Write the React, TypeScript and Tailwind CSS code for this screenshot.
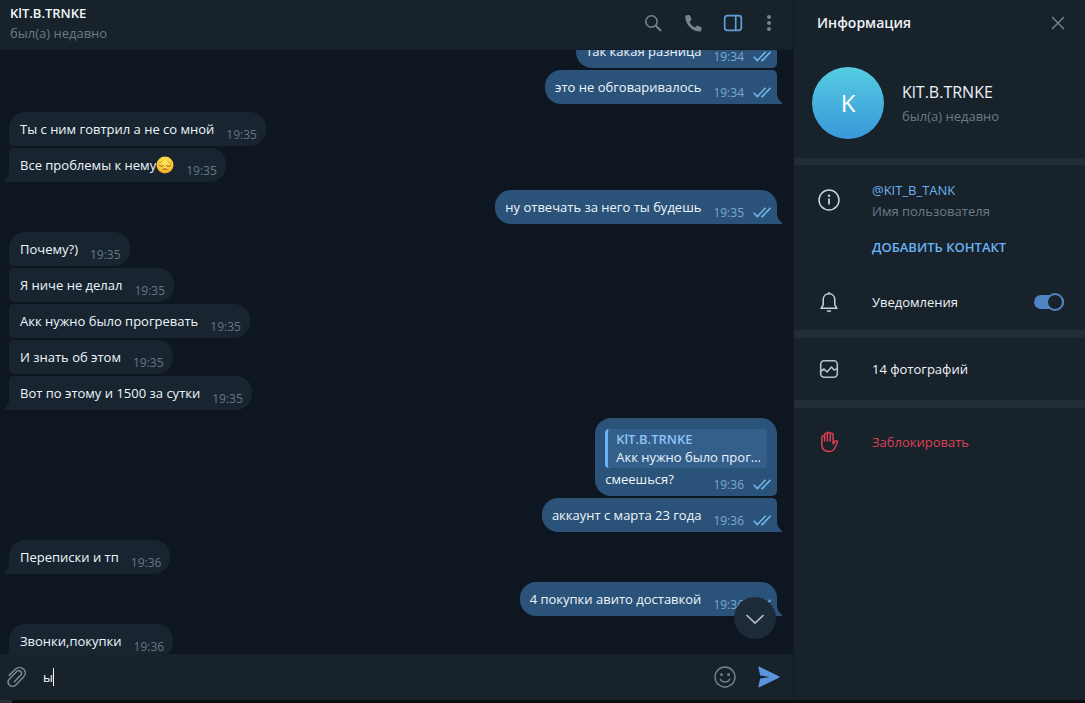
import React from 'react';
import { clsx } from 'clsx';

type Message = {
  text: string;
  time: string;
  emoji?: boolean;
  reply?: { author: string; text: string };
};

type Group = { out: boolean; messages: Message[] };

const CONTACT = {
  name: 'KlT.B.TRNKE',
  status: 'был(а) недавно',
  username: '@KIT_B_TANK',
};

const GROUPS: Group[] = [
  {
    out: true,
    messages: [
      { text: 'так какая разница', time: '19:34' },
      { text: 'это не обговаривалось', time: '19:34' },
    ],
  },
  {
    out: false,
    messages: [
      { text: 'Ты с ним говтрил а не со мной', time: '19:35' },
      { text: 'Все проблемы к нему', time: '19:35', emoji: true },
    ],
  },
  { out: true, messages: [{ text: 'ну отвечать за него ты будешь', time: '19:35' }] },
  {
    out: false,
    messages: [
      { text: 'Почему?)', time: '19:35' },
      { text: 'Я ниче не делал', time: '19:35' },
      { text: 'Акк нужно было прогревать', time: '19:35' },
      { text: 'И знать об этом', time: '19:35' },
      { text: 'Вот по этому и 1500 за сутки', time: '19:35' },
    ],
  },
  {
    out: true,
    messages: [
      {
        text: 'смеешься?',
        time: '19:36',
        reply: { author: 'KlT.B.TRNKE', text: 'Акк нужно было прог...' },
      },
      { text: 'аккаунт с марта 23 года', time: '19:36' },
    ],
  },
  { out: false, messages: [{ text: 'Переписки и тп', time: '19:36' }] },
  { out: true, messages: [{ text: '4 покупки авито доставкой', time: '19:36' }] },
  { out: false, messages: [{ text: 'Звонки,покупки', time: '19:36' }] },
];

function PensiveEmoji() {
  return (
    <svg role="img" aria-label="😔" className="w-[18px] h-[18px] shrink-0" viewBox="0 0 18 18" fill="none">
      <defs>
        <radialGradient id="face" cx="0.5" cy="0.35" r="0.65">
          <stop offset="0" stopColor="#ffe566" />
          <stop offset="0.7" stopColor="#fcc935" />
          <stop offset="1" stopColor="#ee9a1c" />
        </radialGradient>
      </defs>
      <circle cx="9" cy="9" r="8.5" fill="url(#face)" />
      <path d="M2.5 7.2C4 7 5.6 6.2 6.4 5M15.5 7.2C14 7 12.4 6.2 11.6 5" stroke="#c98a24" strokeWidth="0.8" strokeLinecap="round" />
      <path d="M3.4 9.2c1 1.5 3 1.6 4 .5M14.6 9.2c-1 1.5-3 1.6-4 .5" stroke="#7d4c12" strokeWidth="1" strokeLinecap="round" />
      <path d="M6.8 13.6c1.2-.9 3.2-.9 4.4 0" stroke="#7d4c12" strokeWidth="1" strokeLinecap="round" />
    </svg>
  );
}

function ReadMark() {
  return (
    <svg className="w-[18px] h-[18px] ml-[9px]" viewBox="0 0 18 18" fill="none" stroke="#76b8ee" strokeWidth="1.5">
      <path d="M0.7 8.800 4.300 12.600 12.600 3.800" />
      <path d="M8.300 11.800 9.200 12.600 17.600 3.800" />
    </svg>
  );
}

function Tail({ out }: { out: boolean }) {
  return (
    <svg
      className={clsx('absolute bottom-0 w-[6px] h-[10px]', out ? '-right-[5px]' : '-left-[5px] -scale-x-100')}
      viewBox="0 0 6 10"
      fill={out ? '#2b5278' : '#182530'}
    >
      <path d="M0 0h1c0 3.500 2 6.500 5 9V10H0z" />
    </svg>
  );
}

function Bubble({ message, out, first, last }: { message: Message; out: boolean; first: boolean; last: boolean }) {
  const { text, time, emoji, reply } = message;

  return (
    <div
      className={clsx(
        'relative flex flex-col pb-[2px] text-[13px]',
        out ? 'self-end bg-[#2b5278] rounded-l-2xl pl-[10px] pr-[6px]' : 'self-start bg-[#182530] rounded-r-2xl pl-[11px] pr-[9px]',
        out && (first ? 'rounded-tr-2xl' : 'rounded-tr-[5px]'),
        out && !last && 'rounded-br-[5px]',
        !out && (first ? 'rounded-tl-2xl' : 'rounded-tl-[5px]'),
        !out && !last && 'rounded-bl-[5px]',
        reply ? 'pt-[11px]' : 'pt-2'
      )}
    >
      {reply && (
        <div className="mr-1 mb-[2px] rounded-[4px] border-l-[3px] border-[#6ab3f3] bg-[#355f8b] pl-2 pr-[6px] pt-[1px] pb-[2px] leading-[18px]">
          <p className="font-semibold text-[#8fc3f7]">{reply.author}</p>
          <p className="text-[#e8f3fc]">{reply.text}</p>
        </div>
      )}
      <div className="flex items-end justify-between gap-3 leading-[18px]">
        <p className="flex items-center pb-[6px] text-[#eef6fb]">
          {text}
          {emoji && <PensiveEmoji />}
        </p>
        <div className={clsx('flex items-center text-xs leading-[18px]', out ? 'text-[#7da8d3]' : 'text-[#677683]')}>
          <time>{time}</time>
          {out && <ReadMark />}
        </div>
      </div>
      {last && <Tail out={out} />}
    </div>
  );
}

function ChatHeader() {
  return (
    <header className="flex h-[50px] shrink-0 justify-between border-b border-[#111b24] bg-[#18222b] pl-[10px] pr-3">
      <div className="pt-[3px]">
        <h1 className="text-[13px] leading-5 font-semibold text-[#f3f7fa]">{CONTACT.name}</h1>
        <p className="text-[13px] leading-5 text-[#6b7a87]">{CONTACT.status}</p>
      </div>
      <div className="flex h-[46px] items-center gap-4 text-[#76828c]">
        <button type="button" aria-label="Поиск">
          <svg className="size-6" viewBox="0 0 24 24" fill="none" stroke="currentColor" strokeWidth="1.6">
            <circle cx="10.500" cy="10.500" r="5.700" />
            <path d="m14.800 14.800 5.200 5.200" strokeWidth="2" />
          </svg>
        </button>
        <button type="button" aria-label="Позвонить">
          <svg className="size-6" viewBox="0 0 24 24" fill="currentColor">
            <path d="M5.400 4.200 8 3.900c.5 0 .9.300 1.100.8l1.300 3.400c.2.500.1 1-.3 1.300L8.500 10.900c1.200 2.400 2.900 4.200 5.300 5.500l1.700-1.500c.3-.3.800-.4 1.200-.2l3.200 1.300c.5.200.7.600.7 1.100l-.2 2.400c-.1.600-.6 1-1.200 1C11 20.500 4.300 13.500 4.300 5.400c0-.6.500-1.100 1.100-1.200z" />
          </svg>
        </button>
        <button type="button" aria-label="Панель информации" className="text-[#5f9fd8]">
          <svg className="size-6" viewBox="0 0 24 24" fill="none" stroke="currentColor" strokeWidth="1.700">
            <rect x="3.700" y="4.700" width="16.600" height="14.600" rx="2.500" />
            <path d="M14.700 4.700v14.600" />
          </svg>
        </button>
        <button type="button" aria-label="Меню" className="-ml-1">
          <svg className="size-6" viewBox="0 0 24 24" fill="currentColor">
            <circle cx="12" cy="6" r="2" />
            <circle cx="12" cy="12" r="2" />
            <circle cx="12" cy="18" r="2" />
          </svg>
        </button>
      </div>
    </header>
  );
}

function Composer() {
  return (
    <form className="flex h-[46px] shrink-0 items-center bg-[#18222b] pl-[5px] pr-3" onSubmit={(e) => e.preventDefault()}>
      <button type="button" aria-label="Прикрепить файл" className="text-[#7b8791]">
        <svg className="size-6" viewBox="0 0 24 24" fill="none" stroke="currentColor" strokeWidth="1.500" strokeLinecap="round">
          <path d="M4.200 10.400 10.300 4.200c2.600-2.500 6-2.300 8.200-.2 2.300 2.300 2.300 5.600 0 8L10.800 19.900c-1.800 1.800-4.600 1.900-6.300.2-1.700-1.700-1.700-4.300 0-6.100l7.200-7.400c1.200-1.200 2.900-1.200 4-.2 1.100 1.100 1.100 2.700 0 3.900l-6.400 6.500" />
        </svg>
      </button>
      <label className="flex flex-1 items-center pl-[14px]">
        <span className="sr-only">Сообщение</span>
        <input
          type="text"
          defaultValue="ы"
          className="field-sizing-content bg-transparent text-[13px] leading-5 text-[#f3f7fa] outline-none"
        />
        <span aria-hidden="true" className="h-[18px] w-px bg-[#f3f7fa]" />
      </label>
      <button type="button" aria-label="Эмодзи" className="mr-5 text-[#76828c]">
        <svg className="size-6" viewBox="0 0 24 24" fill="none" stroke="currentColor" strokeWidth="1.400">
          <circle cx="12" cy="12" r="10" />
          <path d="M7.300 14.300c1 1.700 2.700 2.600 4.700 2.600s3.700-.9 4.700-2.600" strokeLinecap="round" />
          <circle cx="8.500" cy="9.700" r="1.400" fill="currentColor" stroke="none" />
          <circle cx="15.500" cy="9.700" r="1.400" fill="currentColor" stroke="none" />
        </svg>
      </button>
      <button type="submit" aria-label="Отправить" className="text-[#5b93dc]">
        <svg className="size-6" viewBox="0 0 24 24" fill="currentColor">
          <path d="M1.400 2.700c-.2-.8.400-1.300 1.100-1L22 11.200c.7.400.7 1.200 0 1.600L2.500 22.300c-.7.300-1.300-.2-1.100-1l1.800-7.800 9.500-1.500-9.500-1.500z" />
        </svg>
      </button>
    </form>
  );
}

function Chat() {
  return (
    <main className="flex min-w-0 flex-1 flex-col">
      <ChatHeader />
      <div className="relative flex min-h-0 flex-1 flex-col">
        <div className="flex min-h-0 flex-1 flex-col justify-end overflow-hidden bg-[#0e1621] pl-[9px] pr-4">
          <div className="-mb-1 flex flex-col gap-2">
            {GROUPS.map((group, i) => (
              <div key={i} className="flex flex-col gap-[2px]">
                {group.messages.map((message, j) => (
                  <Bubble
                    key={j}
                    message={message}
                    out={group.out}
                    first={j === 0}
                    last={j === group.messages.length - 1}
                  />
                ))}
              </div>
            ))}
          </div>
        </div>
        <button
          type="button"
          aria-label="Вниз"
          className="absolute right-[17px] bottom-[15px] flex size-[42px] items-center justify-center rounded-full bg-[#1d2a37] text-[#b4bcc4]"
        >
          <svg className="size-6" viewBox="0 0 24 24" fill="none" stroke="currentColor" strokeWidth="1.700">
            <path d="m3.500 9 8.500 8 8.500-8" />
          </svg>
        </button>
      </div>
      <Composer />
    </main>
  );
}

function InfoPanel() {
  return (
    <aside className="flex w-[292px] shrink-0 flex-col border-l border-[#111b24] bg-[#18222b] text-[13px] leading-5 text-[#eef3f7]">
      <div className="flex h-[46px] items-center justify-between pl-[23px] pr-[15px]">
        <h2 className="text-sm font-semibold">Информация</h2>
        <button type="button" aria-label="Закрыть" className="text-[#7b8791]">
          <svg className="size-6" viewBox="0 0 24 24" fill="none" stroke="currentColor" strokeWidth="1.400">
            <path d="m6 6 12 12M18 6 6 18" />
          </svg>
        </button>
      </div>

      <div className="flex h-28 items-center gap-[18px] pt-[2px] pl-[18px]">
        <div className="flex size-[72px] items-center justify-center rounded-full bg-linear-to-b from-[#56cbe0] to-[#3a98db] text-2xl font-medium text-white">
          K
        </div>
        <div>
          <p className="text-base leading-6 font-medium">{CONTACT.name}</p>
          <p className="pt-[2px] text-[#6b7a87]">{CONTACT.status}</p>
        </div>
      </div>

      <section className="border-t-[7px] border-[#222d38] pt-[15px]">
        <div className="flex pl-[23px]">
          <svg className="mt-2 size-6 shrink-0 text-[#cbd3da]" viewBox="0 0 24 24" fill="none" stroke="currentColor" strokeWidth="1.500">
            <circle cx="12" cy="12" r="10" />
            <path d="M12 10.500v6" strokeWidth="1.800" />
            <circle cx="12" cy="7.800" r="1.200" fill="currentColor" stroke="none" />
          </svg>
          <div className="pl-[31px]">
            <a href="#username" className="block text-[#6ab3f3]">{CONTACT.username}</a>
            <p className="pt-[1px] text-[#6b7a87]">Имя пользователя</p>
            <button type="button" className="mt-4 font-semibold text-[#6ab3f3]">ДОБАВИТЬ КОНТАКТ</button>
          </div>
        </div>
        <label className="mt-4 flex h-[57px] items-center pl-[23px] pr-[21px]">
          <svg className="size-6 shrink-0 text-[#cbd3da]" viewBox="0 0 24 24" fill="none" stroke="currentColor" strokeWidth="1.500" strokeLinejoin="round">
            <path d="M12 2v1.800M12 3.800c-3.500 0-5.800 2.500-5.800 6v5L4 18.300h16l-2.200-3.500v-5c0-3.500-2.300-6-5.800-6z" />
            <path d="M9.800 20.700c.5.800 1.300 1.100 2.200 1.100s1.700-.3 2.200-1.100z" fill="currentColor" strokeWidth="0.600" />
          </svg>
          <span className="flex-1 pt-[1px] pl-[31px]">Уведомления</span>
          <span className="flex h-[18px] w-[30px] items-center">
            <input type="checkbox" defaultChecked className="peer sr-only" />
            <span className="flex h-[14px] w-[30px] items-center justify-end rounded-full bg-[#4f84c4]">
              <span className="size-[18px] shrink-0 rounded-full border-2 border-[#5288c1] bg-[#18222b]" />
            </span>
          </span>
        </label>
      </section>

      <section className="border-t-8 border-[#222d38]">
        <button type="button" className="flex h-[62px] w-full items-center pl-[23px] text-left">
          <svg className="size-6 shrink-0 text-[#b9c2ca]" viewBox="0 0 24 24" fill="none" stroke="currentColor" strokeWidth="1.600" strokeLinejoin="round">
            <rect x="3.700" y="3.700" width="16.600" height="16.600" rx="3.500" />
            <path d="m3.700 14.500 3.300-2.500 3 3 4.500-5 2.500 3 3.300-1.200" />
          </svg>
          <span className="pl-[31px]">14 фотографий</span>
        </button>
      </section>

      <section className="flex-1 border-t-8 border-[#222d38]">
        <button type="button" className="flex h-[68px] w-full items-center pl-[23px] text-left text-[#dc4054]">
          <svg className="size-6 shrink-0" viewBox="0 0 24 24" fill="none" stroke="currentColor" strokeWidth="1.500" strokeLinecap="round" strokeLinejoin="round">
            <path d="M4.800 13V7.200c0-2 2.800-2 2.800 0V11V4.800c0-2 2.800-2 2.800 0V11V3.700c0-2 2.900-2 2.900 0V11V4.800c0-2 2.800-2 2.800 0V14l2-2.700c1-1.300 2.900-.3 2.300 1.200l-2.700 5.700c-1 2-3 3.300-5.800 3.300-4.500 0-7.100-2.700-7.100-7z" />
          </svg>
          <span className="pl-[31px]">Заблокировать</span>
        </button>
      </section>
    </aside>
  );
}

export default function App() {
  return (
    <div className="flex h-screen flex-col bg-[#0b0f12] font-['Open_Sans','Noto_Sans',sans-serif]">
      <div className="flex min-h-0 flex-1">
        <Chat />
        <InfoPanel />
      </div>
      <div className="h-[3px] shrink-0">
        <div className="h-full w-3 bg-[#2b3136]" />
      </div>
    </div>
  );
}
